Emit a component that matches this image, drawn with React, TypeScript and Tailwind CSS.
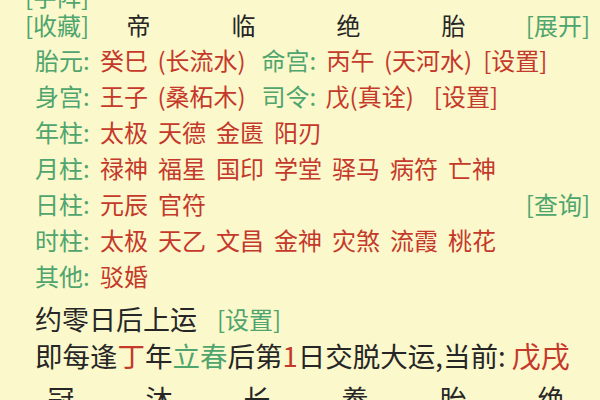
import React from "react";

const G = "text-[#4ea56d]";
const R = "text-[#c5392b]";
const K = "text-[#262626]";

function InfoRow({ label, children, right }: { label: string; children: React.ReactNode; right?: React.ReactNode }) {
  return (
    <div className="flex h-[36px] items-center justify-between pl-[35px] pr-[10px]">
      <div className="flex items-center whitespace-pre">
        <span className={`${G} w-[65px] shrink-0`}>{label}:</span>
        {children}
      </div>
      {right}
    </div>
  );
}

function Words({ items }: { items: string[] }) {
  return (
    <span className={`${R} flex gap-[10px]`}>
      {items.map((w) => (
        <span key={w}>{w}</span>
      ))}
    </span>
  );
}

export default function App() {
  const stems = ["帝", "临", "绝", "胎"];
  const bottom = ["冠", "沐", "长", "養", "胎", "绝"];

  return (
    <div className="h-[400px] w-[600px] overflow-hidden bg-[#fbf8cc] font-['Noto_Sans_CJK_SC','Noto_Sans',sans-serif] text-[24px] leading-none [word-spacing:4px]">
      <div className={`${G} mt-[-16px] flex h-[24px] items-center whitespace-nowrap pl-[25px]`}>[字阵]</div>

      <div className="flex h-[34px] items-center whitespace-nowrap pl-[25px] pr-[10px]">
        <span className={`${G} w-[61px] shrink-0`}>[收藏]</span>
        {stems.map((s) => (
          <span key={s} className={`${K} w-[105px] shrink-0 text-center`}>{s}</span>
        ))}
        <span className={`${G} ml-auto`}>[展开]</span>
      </div>

      <InfoRow label="胎元">
        <span className={R}>癸巳 (长流水)</span>
        <span className={`${G} ml-[16px] w-[65px]`}>命宫:</span>
        <span className={R}>丙午 (天河水)</span>
        <span className={`${R} ml-[11px]`}>[设置]</span>
      </InfoRow>
      <InfoRow label="身宫">
        <span className={R}>王子 (桑柘木)</span>
        <span className={`${G} ml-[16px] w-[64px]`}>司令:</span>
        <span className={R}>戊(真诠)</span>
        <span className={`${R} ml-[20px]`}>[设置]</span>
      </InfoRow>
      <InfoRow label="年柱">
        <Words items={["太极", "天德", "金匮", "阳刃"]} />
      </InfoRow>
      <InfoRow label="月柱">
        <Words items={["禄神", "福星", "国印", "学堂", "驿马", "病符", "亡神"]} />
      </InfoRow>
      <InfoRow label="日柱" right={<span className={G}>[查询]</span>}>
        <Words items={["元辰", "官符"]} />
      </InfoRow>
      <InfoRow label="时柱">
        <Words items={["太极", "天乙", "文昌", "金神", "灾煞", "流霞", "桃花"]} />
      </InfoRow>
      <InfoRow label="其他">
        <Words items={["驳婚"]} />
      </InfoRow>

      <div className="mt-[6px] flex h-[37px] items-center pl-[35px] text-[27px]">
        <span className={K}>约零日后上运</span>
        <span className={`${G} ml-[20px] text-[24px]`}>[设置]</span>
      </div>
      <div className={`${K} flex h-[37px] items-center whitespace-pre pl-[35px] text-[27.5px] [word-spacing:0px]`}>
        <span>即每逢</span>
        <span className={R}>丁</span>
        <span>年</span>
        <span className={G}>立春</span>
        <span>后第</span>
        <span className={R}>1</span>
        <span>日交脱大运,当前: </span>
        <span className={`${R} text-[29px]`}>戊戌</span>
      </div>
      <div className="mt-[6px] flex h-[37px] items-center pl-[12px] text-[27px]">
        {bottom.map((b, i) => (
          <span key={i} className={`${K} w-[99px] text-center`}>{b}</span>
        ))}
      </div>
    </div>
  );
}
